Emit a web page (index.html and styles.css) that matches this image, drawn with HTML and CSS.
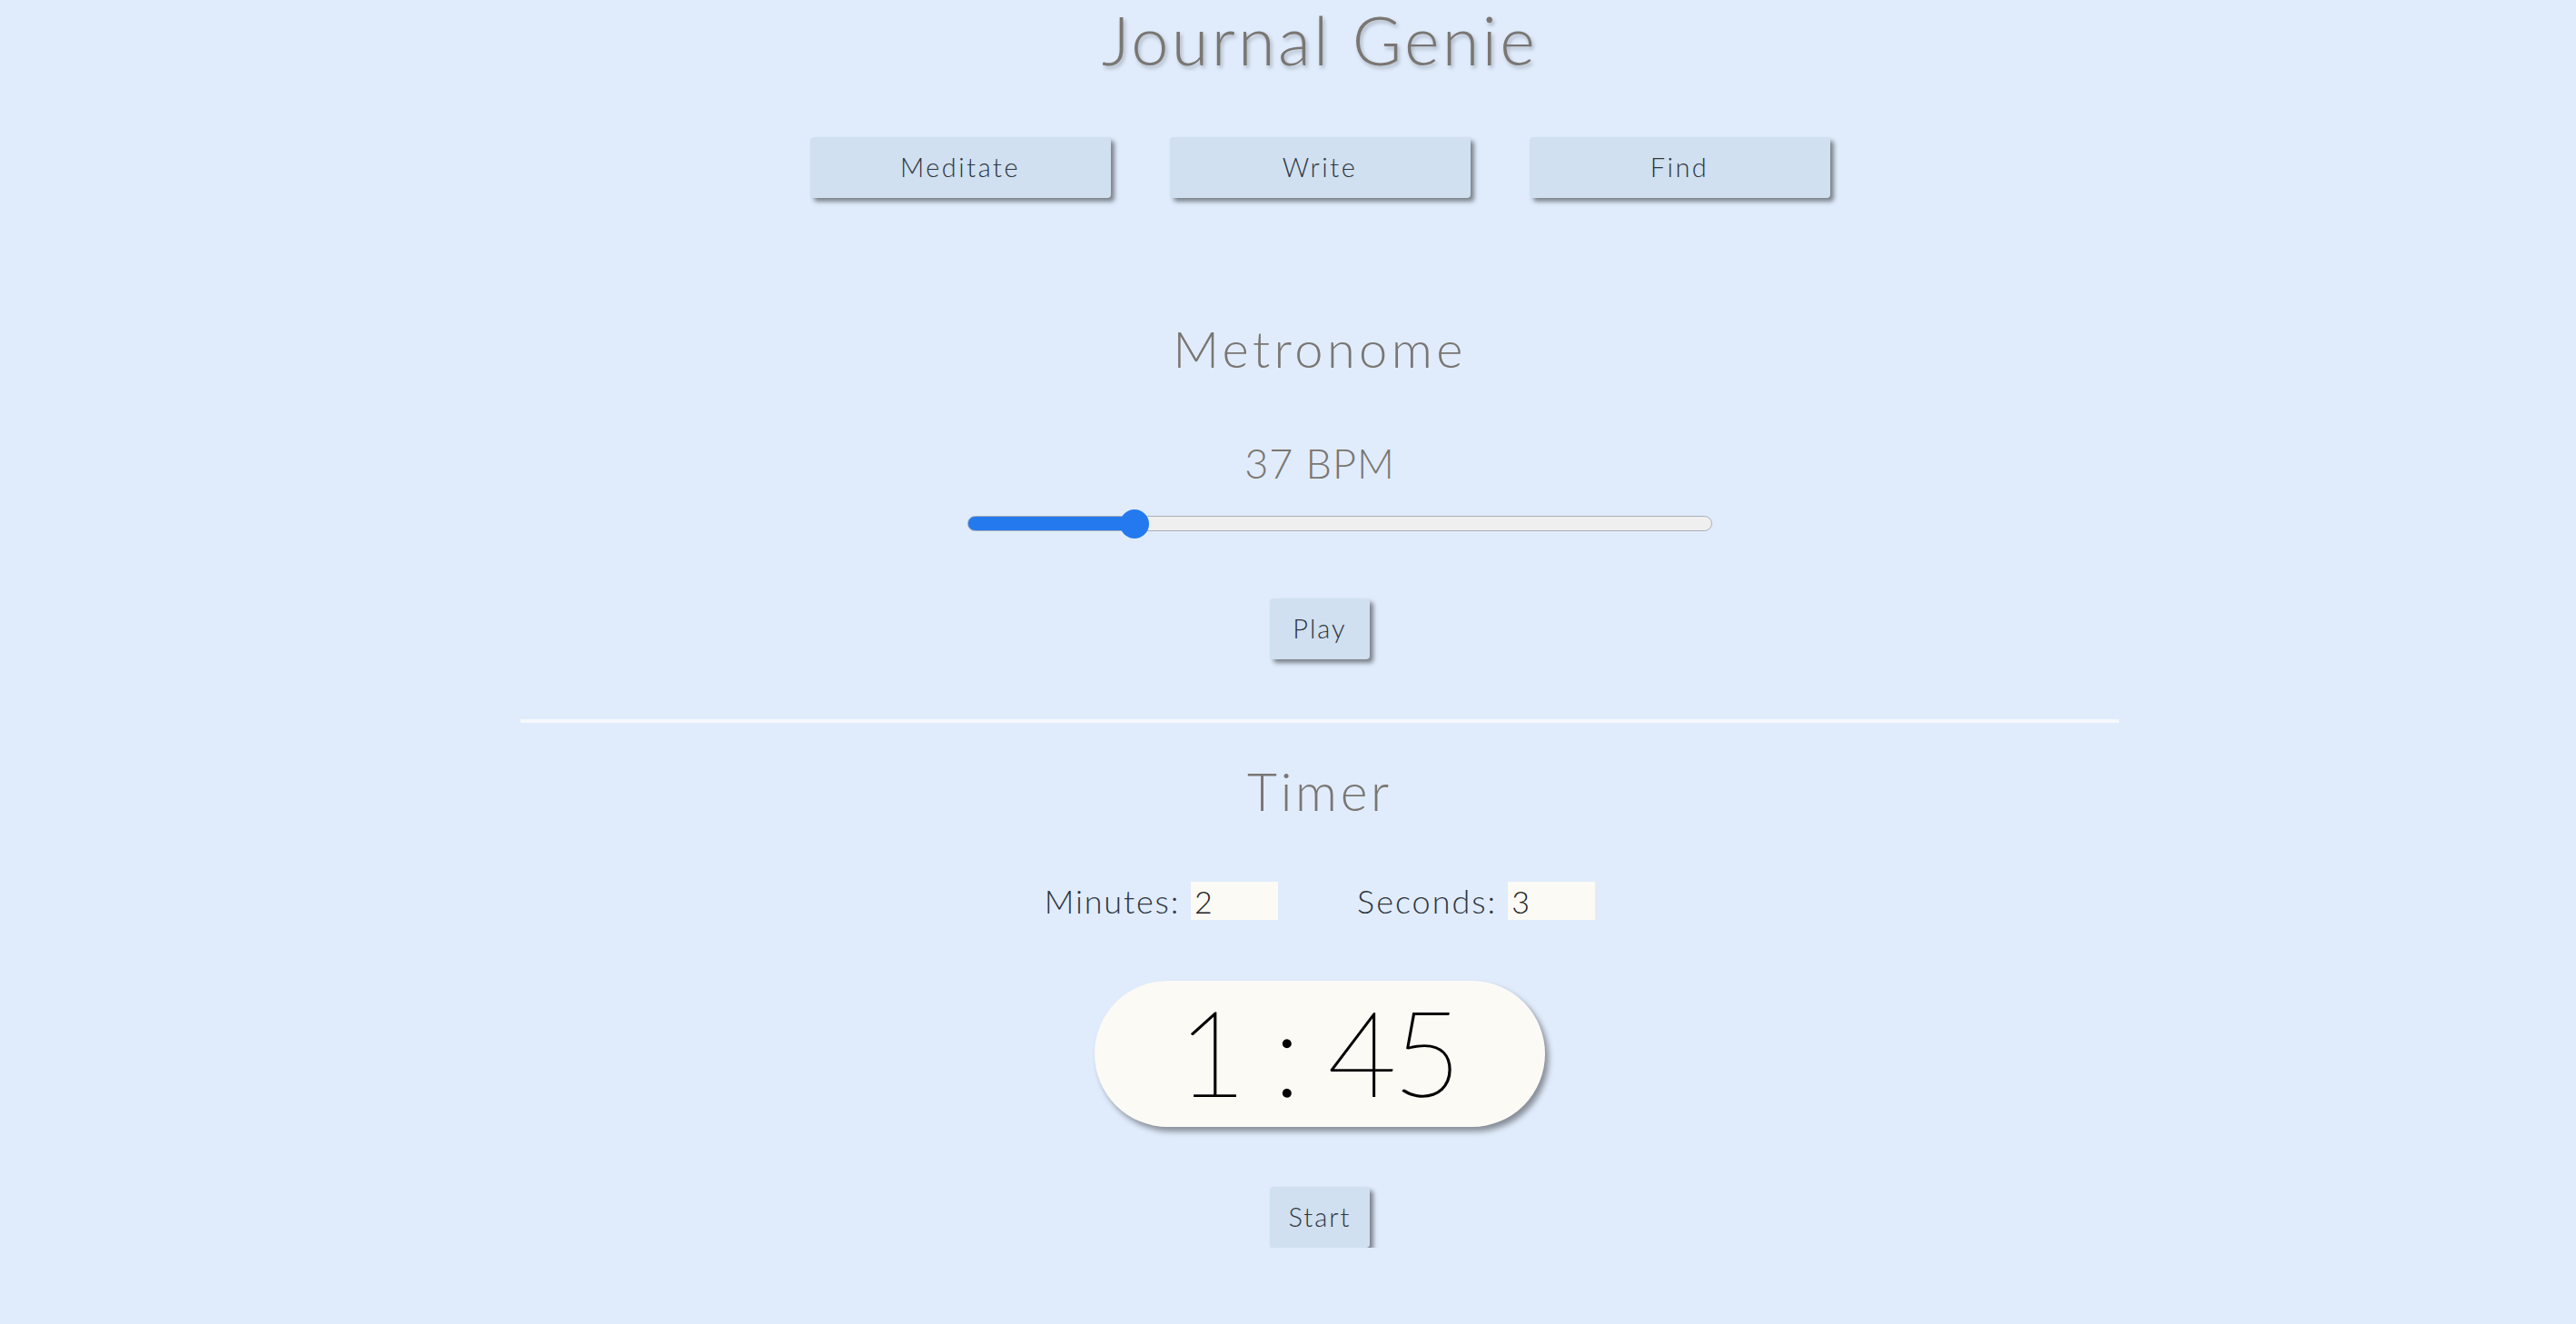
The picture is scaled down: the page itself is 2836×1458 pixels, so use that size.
FILE: index.html
```html
<!DOCTYPE html>
<html lang="en">
<head>
<meta charset="utf-8">
<title>Journal Genie</title>
<link rel="stylesheet" href="styles.css">
</head>
<body>
<main class="app">
  <h1 class="title">Journal Genie</h1>
  <nav class="nav">
    <button class="btn nav-btn">Meditate</button>
    <button class="btn nav-btn">Write</button>
    <button class="btn nav-btn">Find</button>
  </nav>

  <section class="metronome">
    <h2 class="heading">Metronome</h2>
    <div class="bpm">37 BPM</div>
    <input class="slider" type="range" min="20" max="100" value="37" style="--fill: 22%">
    <button class="btn small-btn">Play</button>
  </section>

  <hr class="divider">

  <section class="timer">
    <h2 class="heading timer-heading">Timer</h2>
    <div class="time-row">
      <label class="field field-min">Minutes: <input class="time-input" type="text" value="2"></label>
      <label class="field field-sec">Seconds: <input class="time-input" type="text" value="3"></label>
    </div>
    <div class="clock"><span class="clock-text">1 : 45</span></div>
    <button class="btn small-btn start-btn">Start</button>
  </section>
</main>
</body>
</html>
```

FILE: styles.css
```css
* { box-sizing: border-box; }

html, body {
  margin: 0;
  padding: 0;
  background: #e0ecfc;
}

body {
  font-family: "Lato", "Open Sans", sans-serif;
  font-weight: 300;
}

.app {
  display: flex;
  flex-direction: column;
  align-items: center;
  padding-left: 70px;
  text-align: center;
}

.title {
  margin: 0;
  font-size: 74px;
  line-height: 1.2;
  font-weight: 300;
  color: #7a7672;
  letter-spacing: 3.2px;
  text-shadow: 2px 3px 4px rgba(0, 0, 0, 0.25);
}

.nav {
  display: flex;
  gap: 65px;
  margin-top: 62px;
}

.btn {
  font-family: "Lato", "Open Sans", sans-serif;
  font-weight: 300;
  color: #2f3640;
  background: #d0e0f0;
  border: none;
  border-radius: 4px;
  box-shadow: 4px 4px 5px rgba(0, 0, 0, 0.45);
  padding: 0;
  display: flex;
  align-items: center;
  justify-content: center;
}

.nav-btn {
  width: 331px;
  height: 67px;
  font-size: 29px;
  letter-spacing: 2.5px;
  padding-bottom: 2px;
}

.metronome, .timer {
  display: flex;
  flex-direction: column;
  align-items: center;
}

.heading {
  margin: 132px 0 0;
  font-size: 56px;
  line-height: 1.2;
  font-weight: 300;
  color: #7a7672;
  letter-spacing: 4.4px;
}

.bpm {
  margin-top: 66px;
  font-size: 45px;
  line-height: 1.2;
  color: #7a7672;
  letter-spacing: 1px;
}

.slider {
  -webkit-appearance: none;
  appearance: none;
  margin: 24px 0 0 44px;
  width: 820px;
  height: 32px;
  background: transparent;
}

.slider::-webkit-slider-runnable-track {
  height: 17px;
  border-radius: 9px;
  border: 1px solid #a9aeb5;
  background: linear-gradient(to right, #2479ef 0, #2479ef var(--fill), #efefef var(--fill), #efefef 100%);
}

.slider::-webkit-slider-thumb {
  -webkit-appearance: none;
  appearance: none;
  width: 32px;
  height: 32px;
  border-radius: 50%;
  background: #2479ef;
  border: none;
  margin-top: -8.5px;
}

.small-btn {
  width: 110px;
  height: 67px;
  font-size: 29px;
  margin-top: 66px;
  letter-spacing: 2px;
  padding-bottom: 2px;
}

.divider {
  width: 1760px;
  height: 4px;
  margin: 66px 0 0;
  border: none;
  background: #f6f8fb;
}

.timer-heading {
  margin-top: 41px;
  font-size: 57px;
  letter-spacing: 3.7px;
}

.time-row {
  display: flex;
  gap: 87px;
  margin-top: 65px;
}

.field {
  display: flex;
  align-items: center;
  gap: 12px;
  font-size: 36px;
  color: #2f3640;
  letter-spacing: 1.8px;
}

.field-sec {
  letter-spacing: 2px;
}

.time-input {
  width: 96px;
  height: 42px;
  border: none;
  background: #fbfaf5;
  padding: 0 4px;
  font-family: "Lato", "Open Sans", sans-serif;
  font-weight: 300;
  font-size: 34px;
  letter-spacing: 0;
  color: #222;
  outline: none;
}

.clock {
  margin-top: 66px;
  width: 496px;
  height: 161px;
  border-radius: 81px;
  background: #fbfaf5;
  box-shadow: 4px 5px 6px rgba(0, 0, 0, 0.4);
  display: flex;
  align-items: center;
  justify-content: center;
  padding: 0 4px 8px 0;
}

.clock-text {
  font-size: 130px;
  font-weight: 200;
  color: #000;
  line-height: 1;
  letter-spacing: -3.6px;
  -webkit-text-stroke: 1.6px #000;
}
```
